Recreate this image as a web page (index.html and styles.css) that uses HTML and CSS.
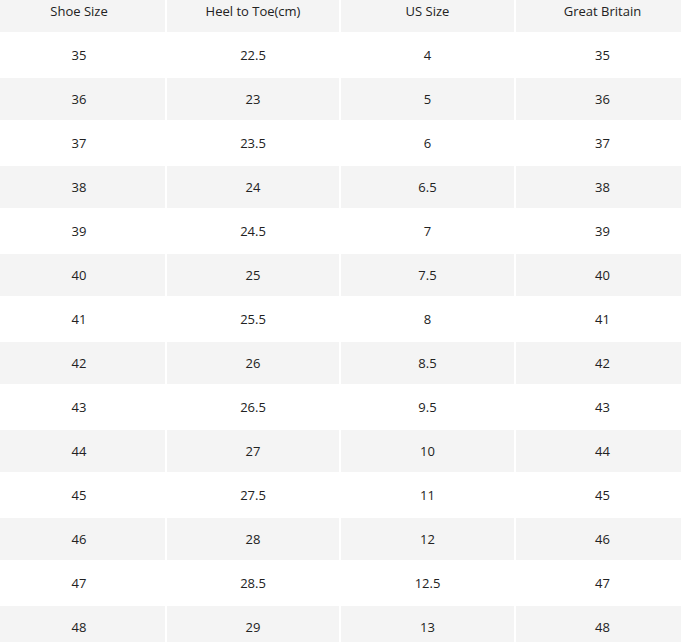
FILE: index.html
```html
<!DOCTYPE html>
<html>
<head>
<meta charset="utf-8">
<link rel="stylesheet" href="styles.css">
</head>
<body>
<table class="size-table">
  <colgroup>
    <col class="c1"><col class="c2"><col class="c3"><col class="c4">
  </colgroup>
  <thead>
    <tr><th>Shoe Size</th><th>Heel to Toe(cm)</th><th>US Size</th><th>Great Britain</th></tr>
  </thead>
  <tbody>
    <tr><td>35</td><td>22.5</td><td>4</td><td>35</td></tr>
    <tr><td>36</td><td>23</td><td>5</td><td>36</td></tr>
    <tr><td>37</td><td>23.5</td><td>6</td><td>37</td></tr>
    <tr><td>38</td><td>24</td><td>6.5</td><td>38</td></tr>
    <tr><td>39</td><td>24.5</td><td>7</td><td>39</td></tr>
    <tr><td>40</td><td>25</td><td>7.5</td><td>40</td></tr>
    <tr><td>41</td><td>25.5</td><td>8</td><td>41</td></tr>
    <tr><td>42</td><td>26</td><td>8.5</td><td>42</td></tr>
    <tr><td>43</td><td>26.5</td><td>9.5</td><td>43</td></tr>
    <tr><td>44</td><td>27</td><td>10</td><td>44</td></tr>
    <tr><td>45</td><td>27.5</td><td>11</td><td>45</td></tr>
    <tr><td>46</td><td>28</td><td>12</td><td>46</td></tr>
    <tr><td>47</td><td>28.5</td><td>12.5</td><td>47</td></tr>
    <tr><td>48</td><td>29</td><td>13</td><td>48</td></tr>
  </tbody>
</table>
</body>
</html>
```
FILE: styles.css
```css
html, body {
  margin: 0;
  padding: 0;
  background: #ffffff;
  overflow: hidden;
}
body {
  font-family: "Open Sans", "Liberation Sans", sans-serif;
  font-size: 13px;
  color: #222222;
}
.size-table {
  border-collapse: separate;
  border-spacing: 2px;
  table-layout: fixed;
  width: 700px;
  margin: -12px 0 0 -9px;
}
.c1 { width: 172px; }
.c2 { width: 172px; }
.c3 { width: 173px; }
.c4 { width: 173px; }
.size-table th,
.size-table td {
  height: 42px;
  padding: 0;
  text-align: center;
  vertical-align: middle;
  font-weight: normal;
  box-sizing: border-box;
}
.size-table th {
  background: #f4f4f4;
}
.size-table tbody tr:nth-child(even) td {
  background: #f4f4f4;
}
```
